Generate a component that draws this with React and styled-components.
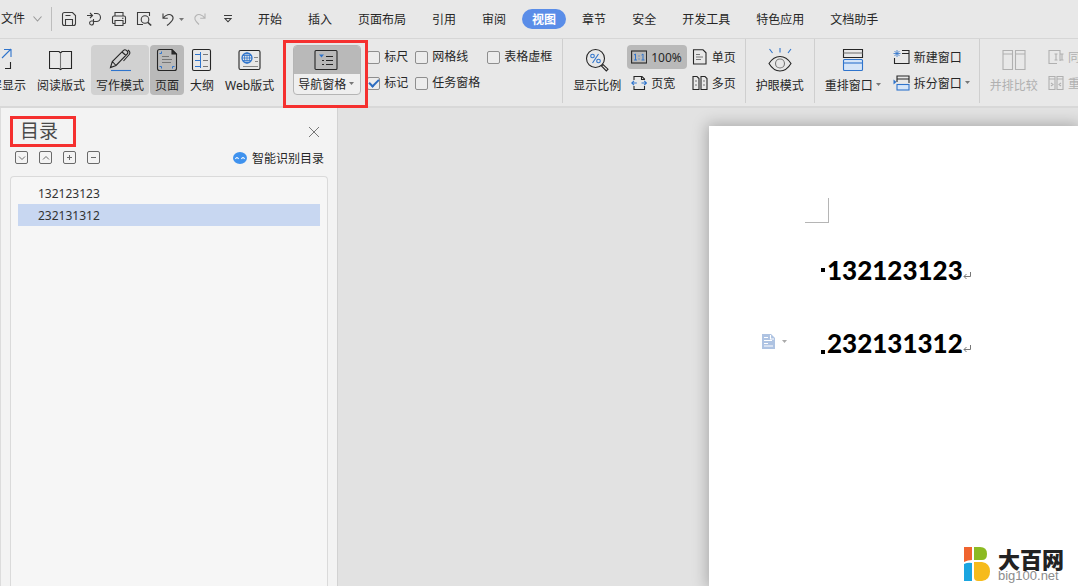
import styled, { createGlobalStyle, css } from "styled-components";

const GlobalStyle = createGlobalStyle`
    * {
        box-sizing: border-box;
    }
    body {
        margin: 0;
        background: #e2e2e2;
        color: #262626;
        font-family: "Noto Sans", "Noto Sans CJK SC", sans-serif;
        font-size: 12px;
        line-height: 18px;
    }
    button, input {
        font: inherit;
        color: inherit;
        margin: 0;
    }
    button {
        border: 0;
        padding: 0;
        background: none;
        white-space: nowrap;
        cursor: pointer;
    }
    svg {
        display: block;
        flex: none;
    }
    h1, h2, p, ul {
        margin: 0;
        padding: 0;
    }
`;

const Shell = styled.div`
    position: relative;
    display: flex;
    flex-direction: column;
    min-height: 100vh;
    overflow: hidden;
`;

/* menu bar */
const MenuBar = styled.header`
    display: flex;
    align-items: center;
    height: 39px;
    background: #e8e8e8;
    border-bottom: 1px solid #d6d6d6;
    overflow: hidden;
`;

const FileButton = styled.button`
    display: flex;
    align-items: center;
    gap: 8px;
    height: 24px;
    padding: 0 9px 0 1px;
`;

const QuickTools = styled.div`
    display: flex;
    align-items: center;
    gap: 9px;
    padding-left: 9px;
    border-left: 1px solid #bdbdbd;
    height: 24px;
    width: 197px;
    flex: none;

    > button:last-child {
        margin-left: 8px;
    }
`;

const QuickButton = styled.button`
    display: flex;
    align-items: center;
    gap: 4px;
    color: ${(p) => (p.disabled ? "#b4b4b4" : "#3c3c3c")};
`;

const Tabs = styled.nav`
    display: flex;
    gap: 6px;
`;

const Tab = styled.button`
    height: 20px;
    padding: 2px 10px 0;
    border-radius: 10px;
    line-height: 18px;
    ${(p) => p.$active && css`
        background: #5a8de8;
        color: #fff;
        font-weight: bold;
    `}
`;

/* ribbon */
const Ribbon = styled.div`
    display: flex;
    height: 69px;
    background: #e8e8e8;
    border-bottom: 2px solid #d8d8d8;
    overflow-x: clip;
`;

const Group = styled.div`
    display: flex;
    flex: none;
    gap: 1px;
    padding: ${(p) => p.$pad || "6px 5px"};
    margin-left: ${(p) => (p.$cut ? "-27px" : "0")};
    border-right: ${(p) => (p.$last ? "0" : "1px solid #cfcfcf")};
    height: 64px;
`;

const BigButton = styled.button`
    display: flex;
    flex-direction: column;
    align-items: center;
    height: 50px;
    padding: 3px 5px 0;
    border-radius: 4px;
    gap: 3px;
    color: ${(p) => (p.disabled ? "#b0b0b0" : "#262626")};
    background: ${(p) => p.$tone || "transparent"};
`;

const Label = styled.span`
    display: flex;
    align-items: center;
    gap: 3px;
    padding-top: 2px;
    line-height: 18px;

    > svg {
        margin-bottom: 4px;
    }
`;

const PaneSlot = styled.div`
    position: relative;
    align-self: flex-start;
    margin-left: 13px;
`;

const PaneButton = styled.button`
    display: flex;
    flex-direction: column;
    width: 68px;
    height: 50px;
    border: 1px solid #b5b5b5;
    border-radius: 4px;
    background: #efefef;
    overflow: hidden;

    > span:first-child {
        display: flex;
        align-items: center;
        justify-content: center;
        width: 100%;
        height: 28px;
        padding-right: 2px;
        background: #b9b9b9;
    }
    > span:last-child {
        width: 100%;
        height: 20px;
        padding-left: 4px;
    }
`;

const Mark = styled.span`
    position: absolute;
    z-index: 1;
    inset: ${(p) => p.$inset};
    border: 3px solid #f5302f;
    pointer-events: none;
`;

const Checks = styled.div`
    display: grid;
    grid-template-columns: repeat(3, auto);
    column-gap: 7px;
    row-gap: 2px;
    align-content: start;
    margin-left: 5px;
`;

const CheckLabel = styled.label`
    display: flex;
    align-items: center;
    gap: 4px;
    height: 24px;
    padding-right: ${(p) => (p.$wide ? "12px" : "0")};
`;

const CheckBox = styled.input`
    appearance: none;
    display: grid;
    place-items: center;
    width: 13px;
    height: 13px;
    border: 1px solid #8e8e8e;
    border-radius: 2px;
    background: #ececec;

    &:checked::after {
        content: "";
        width: 8px;
        height: 4px;
        margin-bottom: 3px;
        border-left: 2px solid #2c6cc0;
        border-bottom: 2px solid #2c6cc0;
        transform: rotate(-45deg);
    }
`;

const Stack = styled.div`
    display: grid;
    gap: 2px;
    align-content: start;
    margin-left: ${(p) => p.$left || "0"};
`;

const SmallButton = styled.button`
    display: flex;
    align-items: center;
    gap: 4px;
    height: 24px;
    padding: 0 ${(p) => (p.$active ? "5px" : "4px")} 0 4px;
    border-radius: 4px;
    color: ${(p) => (p.disabled ? "#b0b0b0" : "#262626")};
    background: ${(p) => (p.$active ? "#b9b9b9" : "transparent")};
`;

/* contents pane */
const Main = styled.main`
    display: flex;
    flex: 1;
`;

const Pane = styled.aside`
    display: flex;
    flex-direction: column;
    flex: none;
    width: 338px;
    padding: 8px 9px 0;
    background: #f3f3f3;
    border-left: 1px solid #dcdcdc;
    border-right: 1px solid #d2d2d2;
`;

const PaneHead = styled.div`
    display: flex;
    align-items: center;
    justify-content: space-between;
    padding-right: 8px;
    height: 31px;
`;

const Title = styled.h1`
    position: relative;
    padding: 0 18px 0 10px;
    font-size: 19px;
    font-weight: normal;
    line-height: 31px;
    color: #4a4a4a;
`;

const PaneTools = styled.div`
    display: flex;
    align-items: center;
    gap: 10px;
    height: 22px;
    padding: 0 4px 0 5px;
    color: #6a6a6a;
`;

const Detect = styled.button`
    display: flex;
    align-items: center;
    gap: 5px;
    margin-left: auto;
    color: #262626;
`;

const Outline = styled.ul`
    flex: 1;
    margin-top: 7px;
    padding: 5px 7px;
    list-style: none;
    background: #f6f6f6;
    border: 1px solid #dadada;
    border-bottom: 0;
    border-radius: 4px 4px 0 0;
`;

const OutlineLink = styled.a`
    display: block;
    padding: 3px 0 1px 20px;
    color: #333;
    text-decoration: none;
    background: ${(p) => (p.$active ? "#c8d7f1" : "transparent")};
`;

/* document */
const Workspace = styled.section`
    flex: 1;
    display: flex;
    justify-content: flex-end;
    padding-top: 18px;
    background: #e2e2e2;
    overflow: hidden;
`;

const Sheet = styled.article`
    width: calc(50% - 1px);
    padding: 72px 0 0 96px;
    background: #fff;
    box-shadow: 0 0 14px 2px rgba(0, 0, 0, 0.25);
`;

const Corner = styled.div`
    width: 24px;
    height: 25px;
    border-right: 1px solid #b5b5b5;
    border-bottom: 1px solid #b5b5b5;
`;

const Heading = styled.h2`
    position: relative;
    display: flex;
    align-items: center;
    margin-top: ${(p) => p.$top};
    padding-left: 22px;
    font-family: Lato, "Noto Sans CJK SC", sans-serif;
    font-size: 26px;
    font-weight: 900;
    line-height: 36px;
    color: #000;

    &::before {
        content: "";
        position: absolute;
        left: 16px;
        top: ${(p) => p.$dot};
        width: 4px;
        height: 4px;
        background: #000;
    }
    > svg {
        margin-top: 12px;
    }
`;

const PasteTag = styled.button`
    position: absolute;
    left: -43px;
    top: 9px;
    display: flex;
    align-items: center;
    gap: 7px;
`;

const Brand = styled.div`
    position: absolute;
    right: 14px;
    bottom: 4px;
    display: flex;
    align-items: center;
    gap: 8px;
`;

const BrandName = styled.p`
    font-size: 22px;
    font-weight: 900;
    line-height: 24px;
    color: #222;
`;

const BrandSite = styled.p`
    font-family: "Liberation Sans", Arial, sans-serif;
    font-size: 13px;
    line-height: 10px;
    color: #8c8c8c;
`;

const BLUE = "#2f74cc";

function Svg({ w = 16, h = 16, children, ...rest }) {
    return (
        <svg width={w} height={h} viewBox={`0 0 ${w} ${h}`} fill="none" stroke="currentColor" strokeWidth="1.1" aria-hidden="true" {...rest}>
            {children}
        </svg>
    );
}

const Caret = ({ color = "#777" }) => (
    <Svg w={5} h={3} stroke="none"><path d="M0 0h5L2.5 3z" fill={color} /></Svg>
);

const Icons = {
    save: <Svg><path d="M1.5 3.5q0-2 2-2h8l3 3v8q0 2-2 2h-9q-2 0-2-2zM4.5 14V8.500h7V14M4.500 4.500h5" /></Svg>,
    output: <Svg><path d="M1 4.500h5M4 2l2.500 2.500L4 7M8 2.500h2.500a4 4 0 0 1 0 8H7.500V8M7.500 10.500v2a2 2 0 1 1-2-2.500h2" /></Svg>,
    print: <Svg><path d="M4 5V1.500h8V5M4 12.500H2.500q-1 0-1-1V6.500q0-1.500 1.500-1.500h10q1.500 0 1.500 1.500v5q0 1-1 1H12M4 9.500h8v5H4zM11 7.300h1.500" /></Svg>,
    preview: <Svg><path d="M7 13.500H1.500v-12h12V5" /><circle cx="9" cy="8.500" r="3.800" /><path d="M11.800 11.300l3.400 3.200" strokeWidth="1.600" /></Svg>,
    undo: <Svg w={14} h={16}><path d="M2 2.500v4.800h4.800M2.200 7.100C5 3.500 8.500 2.700 10.800 4.500c2.600 2.200 1.500 5-4.800 10" /></Svg>,
    redo: <Svg w={14} h={16}><path d="M12 2.500v4.800H7.200M11.800 7.100C9 3.500 5.500 2.700 3.200 4.500c-2.600 2.200-1.500 5 2.800 9" /></Svg>,
    more: <Svg w={8} h={8}><path d="M0 .5h8M1 3.500h6L4 6.800z" /></Svg>,
    full: <Svg w={24} h={24}><path d="M9 1.500H1.500v20H9M20.500 14v6.500H15" /><path d="M12 10l9-9M14 1.500h7V9" stroke={BLUE} /></Svg>,
    read: <Svg w={24} h={24}><path d="M.500 3.500H10L11.500 5 13 3.500h9.500v17H13L11.500 21.500l-1.500-1H.500z" /><path d="M11.500 5v16" stroke="#777" /></Svg>,
    write: <Svg w={24} h={24}><path d="M2.500 19.500l1.800-6L15.500 2.300q1.500-1.300 3.300.4t.5 3.300L8 17.500zM4.300 13.500l3.700 4M14 4l4 3.500M20 2q3 2 1.200 4.500L15.500 13" /><path d="M3 22.500h20" stroke={BLUE} /></Svg>,
    page: <Svg w={24} h={24}><path d="M8 1.500h9l4.500 4.500v11M2.500 7v10M8 22.500h8" /><path d="M2.500 7V3.500q0-2 2-2H8M2.500 17v3.500q0 2 2 2H8M16 22.500h3.500q2 0 2-2V17" /><path d="M17 2v4h4z" fill="#333" /><path d="M7 8.500h7M7 11.500h10M7 14.500h9" stroke="#777" strokeWidth="1" /><path d="M6.500 3.500v2h-2M4.500 18.500h2v2M19.500 18.500h-2v2" stroke={BLUE} strokeWidth="1" /></Svg>,
    outline: <Svg w={24} h={24}><rect x="2.500" y="1.500" width="18" height="21" rx="1.500" /><path d="M10.500 4v16M5 6.500h5M5 12.500h5M5 18.500h5" stroke={BLUE} strokeWidth="1" /><path d="M13 6.500h5M13 12.500h5M13 18.500h5" stroke="#777" strokeWidth="1" /></Svg>,
    web: <Svg w={24} h={24}><rect x="1" y="2.500" width="21" height="19" rx="1.500" /><circle cx="9" cy="10" r="5" stroke={BLUE} strokeWidth="1.300" /><path d="M4 10h10M9 5v10M5 7.500h8M5 12.500h8" stroke={BLUE} strokeWidth=".8" /><ellipse cx="9" cy="10" rx="2.500" ry="5" stroke={BLUE} strokeWidth=".8" /><path d="M16 9.500h4M17 13.500h3M5 18.500h15" stroke="#888" /></Svg>,
    nav: <Svg w={24} h={22}><rect x="1" y="1.500" width="22" height="19" rx="1" /><path d="M12 7.500h7M12 11.500h7M12 15.500h7M8 11.500h2M8 15.500h2" /><path d="M5 5.500h5L7.500 8.500z" fill={BLUE} stroke="none" /></Svg>,
    ratio: <Svg w={24} h={24}><circle cx="10.500" cy="10.500" r="9" /><path d="M16.500 18l1.500-1.500 5 4.700-1.700 1.800z" /><path d="M13.500 6l-6 9" stroke={BLUE} /><circle cx="7.500" cy="8" r="1.800" stroke={BLUE} /><circle cx="13.500" cy="13" r="1.800" stroke={BLUE} /></Svg>,
    one: <Svg><rect x=".6" y="2" width="15" height="12" /><path d="M3 6l1.500-1v6M3 11h3M10.500 6L12 5v6M10.500 11h3M8 6.500v1M8 9.500v1" stroke={BLUE} strokeWidth="1" /></Svg>,
    width: <Svg><path d="M3 5V1.500h8L13.500 4v1M3 11v3.500h10.500V11M10.500 1.500v3h3" /><path d="M.800 8h5M10.500 8h5M3 5.800L.800 8 3 10.200M13.200 5.800L15.500 8l-2.300 2.200" stroke={BLUE} /></Svg>,
    single: <Svg><path d="M1.500 .800H11l3 3v11.200H1.500z" /><path d="M4 5.500h4M4 8h7M4 10.500h5" stroke="#777" /></Svg>,
    multi: <Svg><path d="M1 1.500h4l2 2v11H1zM9 1.500h4l2 2v11H9z" /><path d="M3 6h2M3 10h2M11 6h2M11 10h2" stroke="#777" /></Svg>,
    eye: <Svg w={24} h={24}><path d="M1 15.500Q5.500 8.500 12 8.500t11 7q-4.500 7.500-11 7.500T1 15.500z" /><circle cx="12" cy="15.500" r="4.500" stroke="#777" /><path d="M1.500 1l3 4M12 0v4.500M23 1l-3 4" stroke={BLUE} /></Svg>,
    arrange: <Svg w={22} h={24}><path d="M1.500 9.500v-8h19v8z" /><path d="M1.500 5h19" stroke="#777" /><rect x="1.500" y="11.500" width="19" height="11" rx="1" fill="#d5e5f8" stroke={BLUE} /><path d="M1.500 15h19" stroke={BLUE} /></Svg>,
    newWin: <Svg w={17}><path d="M9 1.500h7v13H1.500V9M9 4.500h7" /><path d="M4 1v7M.500 4.500h7M1.500 2l5 5M6.500 2l-5 5" stroke={BLUE} strokeWidth=".8" /></Svg>,
    split: <Svg w={17}><path d="M4 7V1h12v7M4 4h12" /><rect x="4" y="9.500" width="12" height="5.500" fill="#d5e5f8" stroke={BLUE} /><path d="M.500 4.500L3.500 7 .500 9.500z" fill={BLUE} stroke="none" /></Svg>,
    compare: <Svg w={24} h={24}><path d="M1 2.500h9.500v19H1zM13.500 2.500H23v19h-9.500zM1 6h9.500M13.500 6H23" /></Svg>,
    sync: <Svg><path d="M9 14.500H1v-13h11V12M8 5v6M6.500 5h3M6.500 11h3M14 5v6M12.500 5h3M12.500 11h3" /></Svg>,
    reset: <Svg><path d="M1 1.500h6v13H1zM9 1.500h6v13H9zM1 4h6M9 4h6M3 8l2 1.500L3 11M13 8l-2 1.500 2 1.500" /></Svg>,
};

const tabs = ["开始", "插入", "页面布局", "引用", "审阅", "视图", "章节", "安全", "开发工具", "特色应用", "文档助手"];

const checks = [
    { name: "标尺" },
    { name: "网格线", wide: true },
    { name: "表格虚框" },
    { name: "标记", on: true },
    { name: "任务窗格" },
];

const levelTools = [
    { name: "展开", d: "M4 5.500l3 3 3-3" },
    { name: "收起", d: "M4 8.500l3-3 3 3" },
    { name: "增加", d: "M4 6.500h5M6.500 4v5" },
    { name: "减少", d: "M4 6.500h5" },
];

function Big({ icon, children, ...rest }) {
    return (
        <BigButton {...rest}>
            {Icons[icon]}
            <Label>{children}</Label>
        </BigButton>
    );
}

function Small({ icon, children, ...rest }) {
    return (
        <SmallButton {...rest}>
            {Icons[icon]}
            <Label>{children}</Label>
        </SmallButton>
    );
}

const Return = () => (
    <Svg w={8} h={8} stroke="#777" strokeWidth="1"><path d="M7.500 0v4.500H1M3.500 2l-2.500 2.500L3.500 7" /></Svg>
);

function App() {
    return (
        <Shell>
            <GlobalStyle />
            <MenuBar>
                <FileButton>
                    文件
                    <Svg w={9} h={6} stroke="#999"><path d="M.500 .500l4 4.500 4-4.500" /></Svg>
                </FileButton>
                <QuickTools>
                    <QuickButton aria-label="保存">{Icons.save}</QuickButton>
                    <QuickButton aria-label="输出">{Icons.output}</QuickButton>
                    <QuickButton aria-label="打印">{Icons.print}</QuickButton>
                    <QuickButton aria-label="预览">{Icons.preview}</QuickButton>
                    <QuickButton aria-label="撤销">{Icons.undo}<Caret /></QuickButton>
                    <QuickButton aria-label="恢复" disabled>{Icons.redo}</QuickButton>
                    <QuickButton aria-label="更多">{Icons.more}</QuickButton>
                </QuickTools>
                <Tabs>
                    {tabs.map((t) => <Tab key={t} $active={t === "视图"}>{t}</Tab>)}
                </Tabs>
            </MenuBar>

            <Ribbon>
                <Group $cut $pad="6px 10px 0 0">
                    <Big icon="full">全屏显示</Big>
                    <Big icon="read">阅读版式</Big>
                    <Big icon="write" $tone="#d1d1d1">写作模式</Big>
                    <Big icon="page" $tone="#b9b9b9">页面</Big>
                    <Big icon="outline">大纲</Big>
                    <Big icon="web">Web版式</Big>
                    <PaneSlot>
                        <PaneButton>
                            <span>{Icons.nav}</span>
                            <Label>导航窗格<Caret /></Label>
                        </PaneButton>
                        <Mark $inset="-5px -7px -13px -10px" />
                    </PaneSlot>
                    <Checks>
                        {checks.map((c) => (
                            <CheckLabel key={c.name} $wide={c.wide}>
                                <CheckBox type="checkbox" defaultChecked={c.on} />
                                {c.name}
                            </CheckLabel>
                        ))}
                    </Checks>
                </Group>
                <Group>
                    <Big icon="ratio">显示比例</Big>
                    <Stack>
                        <Small icon="one" $active>100%</Small>
                        <Small icon="width">页宽</Small>
                    </Stack>
                    <Stack>
                        <Small icon="single">单页</Small>
                        <Small icon="multi">多页</Small>
                    </Stack>
                </Group>
                <Group>
                    <Big icon="eye">护眼模式</Big>
                </Group>
                <Group>
                    <Big icon="arrange">重排窗口<Caret /></Big>
                    <Stack $left="2px">
                        <Small icon="newWin">新建窗口</Small>
                        <Small icon="split">拆分窗口<Caret /></Small>
                    </Stack>
                </Group>
                <Group $last>
                    <Big icon="compare" disabled>并排比较</Big>
                    <Stack>
                        <Small icon="sync" disabled>同步滚动</Small>
                        <Small icon="reset" disabled>重设位置</Small>
                    </Stack>
                </Group>
            </Ribbon>

            <Main>
                <Pane>
                    <PaneHead>
                        <Title>目录<Mark $inset="0" /></Title>
                        <button aria-label="关闭">
                            <Svg w={12} h={12} stroke="#777" strokeWidth="1"><path d="M1 1l10 10M11 1L1 11" /></Svg>
                        </button>
                    </PaneHead>
                    <PaneTools>
                        {levelTools.map((t) => (
                            <button key={t.name} aria-label={t.name}>
                                <Svg w={14} h={14} strokeWidth="1"><rect x=".5" y=".5" width="12" height="12" rx="1.500" /><path d={t.d} /></Svg>
                            </button>
                        ))}
                        <Detect>
                            <Svg w={14} h={12} stroke="none">
                                <ellipse cx="7" cy="6" rx="7" ry="6" fill="#3f92ee" />
                                <path d="M2.500 7q1.500-3 3 0M8.500 7q1.500-3 3 0" stroke="#fff" strokeWidth="1.200" />
                            </Svg>
                            <Label>智能识别目录</Label>
                        </Detect>
                    </PaneTools>
                    <Outline>
                        <li><OutlineLink href="#h1">132123123</OutlineLink></li>
                        <li><OutlineLink href="#h2" $active>232131312</OutlineLink></li>
                    </Outline>
                </Pane>

                <Workspace>
                    <Sheet>
                        <Corner />
                        <Heading id="h1" $top="29px" $dot="16px">132123123<Return /></Heading>
                        <Heading id="h2" $top="37px" $dot="25px">
                            <PasteTag aria-label="段落选项">
                                <Svg w={13} h={15} stroke="none">
                                    <path d="M0 0h9l4 4v11H0z" fill="#aec3e2" />
                                    <path d="M2 3.500h4M2 6.500h8M2 9.500h4M2 12h9M8.500 1v4H12" stroke="#fff" />
                                </Svg>
                                <Caret color="#aaa" />
                            </PasteTag>
                            232131312<Return />
                        </Heading>
                    </Sheet>
                </Workspace>
            </Main>

            <Brand>
                <Svg w={27} h={36} stroke="none">
                    <path d="M1 1h8v13q-4 0-8 2z" fill="#f0642f" />
                    <path d="M11 1h6q7 0 7 7 0 6-5 6h-8z" fill="#8cba22" />
                    <path d="M1 18q4-2 8-1v18H1z" fill="#1aa5e0" />
                    <path d="M11 16h8q8 1 8 9.500T19 35h-4q-4 0-4-4z" fill="#f6bb1c" />
                </Svg>
                <div>
                    <BrandName>大百网</BrandName>
                    <BrandSite>big100.net</BrandSite>
                </div>
            </Brand>
        </Shell>
    );
}

export default App;
